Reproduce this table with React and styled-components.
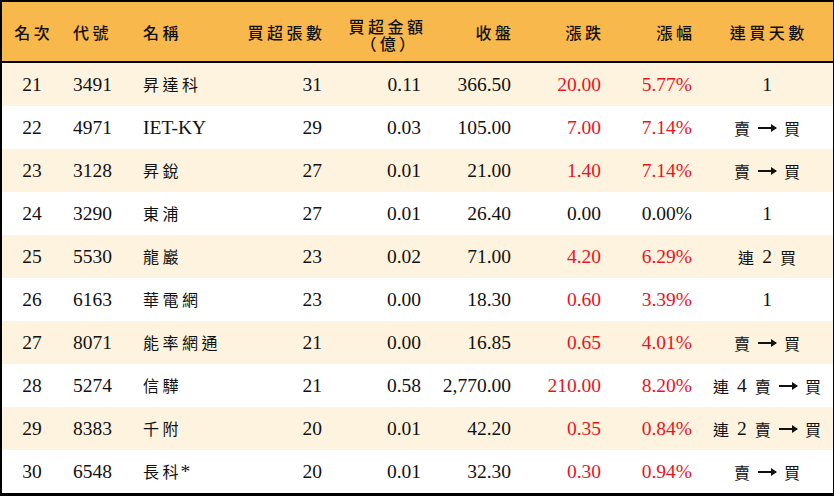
import React from 'react';
import styled, { createGlobalStyle } from 'styled-components';

const GlobalStyle = createGlobalStyle`
  html, body {
    margin: 0;
    padding: 0;
    background: #fff;
  }
  body {
    font-family: "Liberation Serif", "Noto Sans CJK TC", serif;
  }
`;

const COLUMNS = '60px 73px 95px 102px 99px 90px 90px 91px 130px';

const rows = [
  ['21', '3491', '昇達科', '31', '0.11', '366.50', '20.00', '5.77%', '1'],
  ['22', '4971', 'IET-KY', '29', '0.03', '105.00', '7.00', '7.14%', '賣 → 買'],
  ['23', '3128', '昇銳', '27', '0.01', '21.00', '1.40', '7.14%', '賣 → 買'],
  ['24', '3290', '東浦', '27', '0.01', '26.40', '0.00', '0.00%', '1'],
  ['25', '5530', '龍巖', '23', '0.02', '71.00', '4.20', '6.29%', '連 2 買'],
  ['26', '6163', '華電網', '23', '0.00', '18.30', '0.60', '3.39%', '1'],
  ['27', '8071', '能率網通', '21', '0.00', '16.85', '0.65', '4.01%', '賣 → 買'],
  ['28', '5274', '信驊', '21', '0.58', '2,770.00', '210.00', '8.20%', '連 4 賣 → 買'],
  ['29', '8383', '千附', '20', '0.01', '42.20', '0.35', '0.84%', '連 2 賣 → 買'],
  ['30', '6548', '長科*', '20', '0.01', '32.30', '0.30', '0.94%', '賣 → 買'],
];

const align = ['center', 'left', 'left', 'right', 'right', 'right', 'right', 'right', 'center'];
const padLeft = [0, 11, 8, 0, 0, 0, 0, 0, 0];

const Table = styled.div`
  box-sizing: border-box;
  width: 834px;
  height: 496px;
  border: 2px solid #000;
  border-bottom-width: 3px;
  border-right-width: 1.5px;
  display: flex;
  flex-direction: column;
  overflow: hidden;
`;

const HeaderRow = styled.div`
  display: grid;
  grid-template-columns: ${COLUMNS};
  height: 59px;
  background: #f9b84c;
  border-bottom: 2px solid #000;
  color: #1a1a1a;
`;

const BodyRow = styled.div`
  display: grid;
  grid-template-columns: ${COLUMNS};
  height: 43px;
  background: ${(p) => (p.$striped ? '#fdf3df' : '#ffffff')};
`;

const Cell = styled.div`
  display: flex;
  align-items: center;
  justify-content: ${(p) =>
    p.$align === 'left' ? 'flex-start' : p.$align === 'right' ? 'flex-end' : 'center'};
  padding-left: ${(p) => p.$pl}px;
  padding-right: ${(p) => (p.$align === 'right' ? 10 : 0)}px;
  font-size: 19.5px;
  white-space: nowrap;
  color: ${(p) => (p.$red ? '#ee1122' : '#111')};
`;

const HeadCell = styled(Cell)`
  flex-direction: column;
  align-items: ${(p) =>
    p.$align === 'left' ? 'flex-start' : p.$align === 'right' ? 'flex-end' : 'center'};
  justify-content: center;
`;

const Han = styled.span`
  font-family: "Noto Sans CJK TC", "Liberation Serif", sans-serif;
  font-size: 16px;
  line-height: 18px;
  letter-spacing: ${(p) => (p.$tight ? 0 : 3.5)}px;
  margin-right: ${(p) => (p.$tight ? 0 : p.$bold ? -3.5 : -1.5)}px;
  font-weight: ${(p) => (p.$bold ? 500 : 400)};
`;

const Arrow = styled.span`
  display: inline-block;
  width: 18px;
  height: 1.5px;
  background: #111;
  position: relative;
  margin-top: 1px;
  &::after {
    content: '';
    position: absolute;
    right: -1px;
    top: -3.25px;
    border-left: 6px solid #111;
    border-top: 4px solid transparent;
    border-bottom: 4px solid transparent;
  }
`;

const TwoLine = styled.span`
  display: flex;
  flex-direction: column;
  align-items: center;
  margin-top: 5px;
  margin-right: -2px;
`;

const Unit = styled.span`
  font-family: "Noto Sans CJK TC", sans-serif;
  font-size: 16px;
  line-height: 17px;
  font-weight: 500;
  padding-left: 4px;
`;

const Mixed = styled.span`
  display: inline-flex;
  align-items: center;
  gap: 8px;
`;

const hanRe = /[\u4e00-\u9fff]/;

function Text({ value }) {
  const parts = value.split(' ');
  if (parts.length > 1) {
    return (
      <Mixed>
        {parts.map((p, i) =>
          p === '→' ? (
            <Arrow key={i} />
          ) : hanRe.test(p) ? (
            <Han key={i} $tight>{p}</Han>
          ) : (
            <span key={i}>{p}</span>
          )
        )}
      </Mixed>
    );
  }
  const chunks = value.match(/[\u4e00-\u9fff]+|[^\u4e00-\u9fff]+/g) || [];
  return (
    <span>
      {chunks.map((c, i) =>
        hanRe.test(c) ? <Han key={i}>{c}</Han> : <span key={i}>{c}</span>
      )}
    </span>
  );
}

const headers = ['名次', '代號', '名稱', '買超張數', null, '收盤', '漲跌', '漲幅', '連買天數'];

export default function App() {
  return (
    <>
      <GlobalStyle />
      <Table>
        <HeaderRow>
          {headers.map((h, i) => (
            <HeadCell key={i} $align={align[i]} $pl={padLeft[i]}>
              {h ? (
                <Han $bold>{h}</Han>
              ) : (
                <TwoLine>
                  <Han $bold>買超金額</Han>
                  <Unit>（&#8201;億&#8201;）</Unit>
                </TwoLine>
              )}
            </HeadCell>
          ))}
        </HeaderRow>
        {rows.map((r, ri) => (
          <BodyRow key={ri} $striped={ri % 2 === 0}>
            {r.map((v, ci) => (
              <Cell
                key={ci}
                $align={align[ci]}
                $pl={padLeft[ci]}
                $red={(ci === 6 || ci === 7) && v !== '0.00' && v !== '0.00%'}
              >
                <Text value={v} />
              </Cell>
            ))}
          </BodyRow>
        ))}
      </Table>
    </>
  );
}
